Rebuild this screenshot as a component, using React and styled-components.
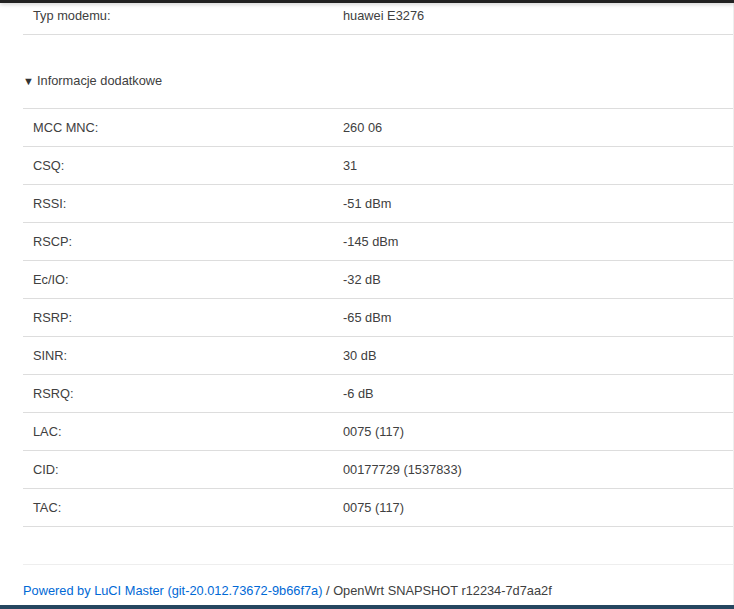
import React from "react";
import styled, { createGlobalStyle } from "styled-components";

const GlobalStyle = createGlobalStyle`
  html, body {
    margin: 0;
    padding: 0;
    background: #fff;
  }
  body {
    font-family: "Liberation Sans", Arial, sans-serif;
    font-size: 12.8px;
    color: #404040;
  }
`;

const Page = styled.div`
  width: 734px;
  height: 609px;
  display: flex;
  flex-direction: column;
  overflow: hidden;
`;

const TopBar = styled.div`
  height: 3px;
  flex: none;
  background: #222;
  box-shadow: 0 1px 4px rgba(0, 0, 0, 0.25);
  position: relative;
  z-index: 1;
`;

const Main = styled.div`
  flex: 1;
  display: flex;
  flex-direction: column;
  padding-left: 23px;
  border-right: 1px solid #eee;
`;

const Row = styled.div`
  display: flex;
  align-items: center;
  box-sizing: border-box;
  height: ${({ $cut }) => ($cut ? "32px" : "38px")};
  padding-bottom: ${({ $cut }) => ($cut ? "7px" : "0")};
  border-bottom: 1px solid #ddd;
`;

const Label = styled.div`
  width: 310px;
  padding-left: 10px;
  flex: none;
`;

const Value = styled.div`
  flex: 1;
`;

const SectionHead = styled.div`
  display: flex;
  align-items: center;
  gap: 5px;
  height: 75px;
  box-sizing: border-box;
  padding-top: 18px;
  border-bottom: 1px solid #ddd;
  border-top: 1px solid #ddd;
  margin-top: -1px;
  cursor: pointer;
`;

const Arrow = styled.span`
  font-size: 11px;
  width: 9px;
  color: #333;
`;

const Footer = styled.div`
  margin-top: 37px;
  border-top: 1px solid #eee;
  padding-top: 18px;
  height: 40px;
  box-sizing: border-box;
  white-space: nowrap;
`;

const Link = styled.a`
  color: #0069d6;
  text-decoration: none;
`;

const BottomBar = styled.div`
  height: 4px;
  flex: none;
  background: #254660;
`;

const extra = [
  ["MCC MNC:", "260 06"],
  ["CSQ:", "31"],
  ["RSSI:", "-51 dBm"],
  ["RSCP:", "-145 dBm"],
  ["Ec/IO:", "-32 dB"],
  ["RSRP:", "-65 dBm"],
  ["SINR:", "30 dB"],
  ["RSRQ:", "-6 dB"],
  ["LAC:", "0075 (117)"],
  ["CID:", "00177729 (1537833)"],
  ["TAC:", "0075 (117)"],
];

export default function App() {
  return (
    <Page>
      <GlobalStyle />
      <TopBar />
      <Main>
        <Row $cut>
          <Label>Typ modemu:</Label>
          <Value>huawei E3276</Value>
        </Row>
        <SectionHead>
          <Arrow>▼</Arrow>
          <span>Informacje dodatkowe</span>
        </SectionHead>
        {extra.map(([k, v]) => (
          <Row key={k}>
            <Label>{k}</Label>
            <Value>{v}</Value>
          </Row>
        ))}
        <Footer>
          <Link href="#">Powered by LuCI Master (git-20.012.73672-9b66f7a)</Link>
          {" / OpenWrt SNAPSHOT r12234-7d7aa2f"}
        </Footer>
      </Main>
      <BottomBar />
    </Page>
  );
}
